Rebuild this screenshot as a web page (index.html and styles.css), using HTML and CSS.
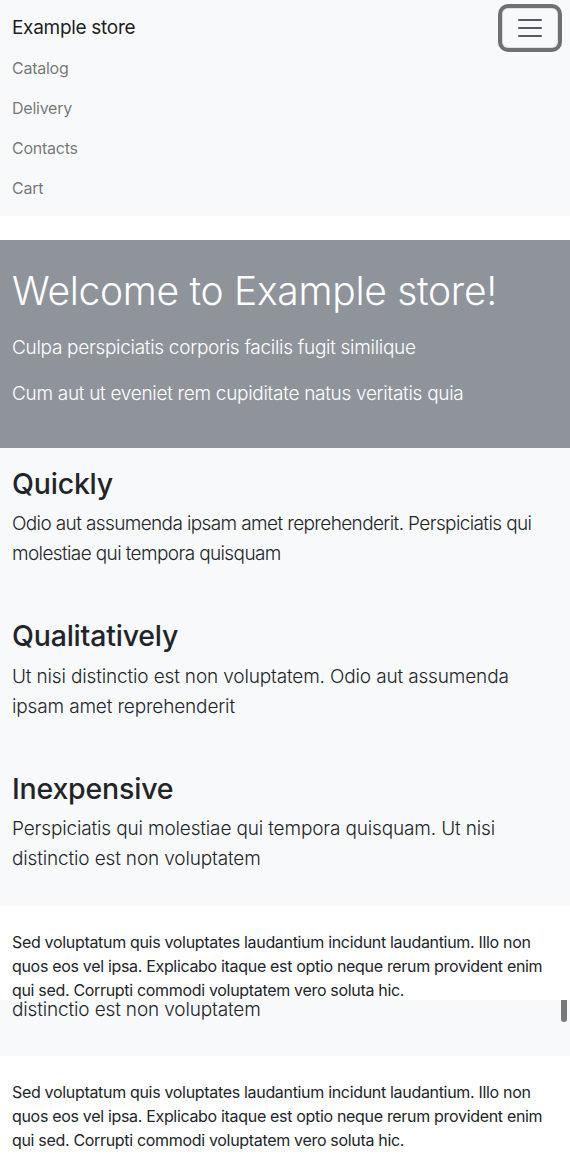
FILE: index.html
```html
<!DOCTYPE html>
<html lang="en">
<head>
<meta charset="utf-8">
<title>Example store</title>
<link rel="stylesheet" href="styles.css">
</head>
<body>
<nav class="navbar">
  <div class="nav-container">
    <a class="brand" href="#">Example store</a>
    <button class="toggler" type="button" aria-label="Toggle navigation">
      <svg class="toggler-icon" viewBox="0 0 30 30" width="30" height="30"><path d="M4 7h22M4 15h22M4 23h22" stroke="rgba(33,37,41,0.75)" stroke-width="2" stroke-linecap="round" fill="none"/></svg>
    </button>
    <ul class="nav-list">
      <li><a class="nav-link" href="#">Catalog</a></li>
      <li><a class="nav-link" href="#">Delivery</a></li>
      <li><a class="nav-link" href="#">Contacts</a></li>
      <li><a class="nav-link" href="#">Cart</a></li>
    </ul>
  </div>
</nav>

<header class="hero">
  <h1 class="hero-title">Welcome to Example store!</h1>
  <p class="lead">Culpa perspiciatis corporis facilis fugit similique</p>
  <p class="lead">Cum aut ut eveniet rem cupiditate natus veritatis quia</p>
</header>

<section class="features">
  <div class="feature">
    <h2>Quickly</h2>
    <p class="lead-dark lead-tight">Odio aut assumenda ipsam amet reprehenderit. Perspiciatis qui molestiae qui tempora quisquam</p>
  </div>
  <div class="feature">
    <h2>Qualitatively</h2>
    <p class="lead-dark">Ut nisi distinctio est non voluptatem. Odio aut assumenda ipsam amet reprehenderit</p>
  </div>
  <div class="feature">
    <h2>Inexpensive</h2>
    <p class="lead-dark">Perspiciatis qui molestiae qui tempora quisquam. Ut nisi distinctio est non voluptatem</p>
  </div>
</section>

<footer class="footer footer-cut">
  <p>Sed voluptatum quis voluptates laudantium incidunt laudantium. Illo non quos eos vel ipsa. Explicabo itaque est optio neque rerum provident enim qui sed. Corrupti commodi voluptatem vero soluta hic.</p>
</footer>

<div class="peek">
  <p class="lead-dark peek-line">distinctio est non voluptatem</p>
  <span class="scroll-thumb"></span>
</div>

<footer class="footer">
  <p>Sed voluptatum quis voluptates laudantium incidunt laudantium. Illo non quos eos vel ipsa. Explicabo itaque est optio neque rerum provident enim qui sed. Corrupti commodi voluptatem vero soluta hic.</p>
</footer>
</body>
</html>
```

FILE: styles.css
```css
* { box-sizing: border-box; }

html, body {
  margin: 0;
  padding: 0;
}

body {
  font-family: Inter, "Noto Sans", "Liberation Sans", sans-serif;
  font-size: 16px;
  line-height: 1.5;
  color: #212529;
  background: #fff;
  overflow: hidden;
}

.navbar {
  background: #f8f9fa;
  padding: 8px 0;
}

.nav-container {
  display: flex;
  flex-wrap: wrap;
  align-items: center;
  justify-content: space-between;
  padding: 0 12px;
}

.brand {
  font-size: 19px;
  letter-spacing: -0.3px;
  line-height: 30px;
  padding: 5px 0;
  color: rgba(0, 0, 0, 0.9);
  text-decoration: none;
}

.toggler {
  width: 56px;
  height: 40px;
  padding: 4px 12px;
  border: 1px solid rgba(0, 0, 0, 0.1);
  border-radius: 6px;
  background: transparent;
  box-shadow: 0 0 0 4px rgba(0, 0, 0, 0.55);
  display: flex;
  align-items: center;
  justify-content: center;
}

.toggler-icon {
  display: block;
}

.nav-list {
  list-style: none;
  margin: 0;
  padding: 0;
  flex-basis: 100%;
  display: flex;
  flex-direction: column;
}

.nav-link {
  display: block;
  padding: 8px 0;
  line-height: 24px;
  letter-spacing: -0.25px;
  color: rgba(0, 0, 0, 0.55);
  text-decoration: none;
}

.hero {
  margin-top: 24px;
  background: #8f949b;
  color: #fff;
  padding: 28px 12px 23px;
}

.hero-title {
  font-size: 39px;
  font-weight: 300;
  letter-spacing: -0.3px;
  line-height: 1.2;
  margin: 0 0 18px;
}

.lead {
  font-size: 19px;
  font-weight: 300;
  letter-spacing: -0.3px;
  line-height: 30px;
  margin: 0 0 16px;
}

.features {
  background: #f8f9fa;
  padding: 19px 12px 16px;
  display: flex;
  flex-direction: column;
  gap: 34.5px;
}

.feature h2 {
  font-size: 28.5px;
  font-weight: 500;
  letter-spacing: -0.2px;
  line-height: 1.2;
  margin: 0 0 8px;
}

.lead-dark {
  font-size: 19px;
  font-weight: 300;
  letter-spacing: -0.15px;
  line-height: 30px;
  margin: 0 0 16px;
}

.lead-tight {
  letter-spacing: -0.62px;
}

.footer {
  background: #fff;
  padding: 24px 12px;
}

.footer p {
  margin: 0;
  font-size: 16px;
  letter-spacing: -0.32px;
  line-height: 24px;
}

.footer-cut {
  height: 94px;
  overflow: hidden;
}

.peek {
  position: relative;
  height: 56px;
  background: #f8f9fa;
  padding: 0 12px;
}

.peek-line {
  margin: 0;
  line-height: 20px;
}

.scroll-thumb {
  position: absolute;
  top: 0;
  right: 3px;
  width: 6px;
  height: 22px;
  background: #777;
  border-radius: 0 0 3px 3px;
}
```
